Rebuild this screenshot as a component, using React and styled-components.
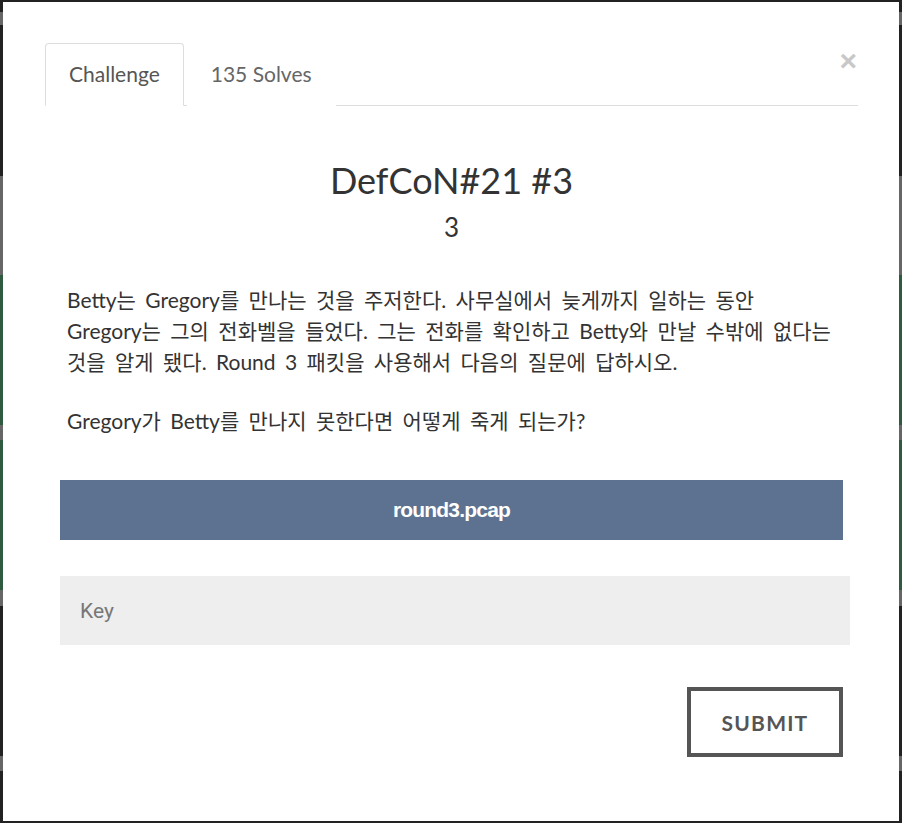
import styled, { createGlobalStyle } from "styled-components";

/* Global ---------------------------*/
const GlobalStyle = createGlobalStyle`
    html, body {
        margin: 0;
        padding: 0;
        background: #222;
    }
    body {
        font-family: Lato, "Noto Sans CJK KR", sans-serif;
    }
    * {
        box-sizing: border-box;
    }
`;

const App = () => {
    return (
        <Backdrop>
            <GlobalStyle />
            <Modal>
                <CloseButton aria-label="Close">×</CloseButton>
                <TabNav>
                    <Tab active>Challenge</Tab>
                    <Tab>135 Solves</Tab>
                </TabNav>

                <Body>
                    <Title>DefCoN#21 #3</Title>
                    <Points>3</Points>

                    <Description>
                        <p>
                            Betty는 Gregory를 만나는 것을 주저한다. 사무실에서 늦게까지 일하는 동안
                            <br />
                            Gregory는 그의 전화벨을 들었다. 그는 전화를 확인하고 Betty와 만날 수밖에 없다는
                            <br />
                            것을 알게 됐다. Round 3 패킷을 사용해서 다음의 질문에 답하시오.
                        </p>
                        <p>Gregory가 Betty를 만나지 못한다면 어떻게 죽게 되는가?</p>
                    </Description>

                    <FileButton href="#">round3.pcap</FileButton>

                    <KeyInput type="text" placeholder="Key" />

                    <Actions>
                        <SubmitButton type="button">Submit</SubmitButton>
                    </Actions>
                </Body>
            </Modal>
        </Backdrop>
    );
};

export default App;

/* Styles ---------------------------*/
const Backdrop = styled.div`
    height: 823px;
    padding: 2px 3px 2px 3px;
    display: flex;
    background: linear-gradient(
        to bottom,
        #222 0px,
        #222 12px,
        #666 12px,
        #666 25px,
        #222 25px,
        #222 176px,
        #666 176px,
        #666 275px,
        #2f5a3f 275px,
        #2f5a3f 425px,
        #666 425px,
        #666 440px,
        #2f5a3f 440px,
        #2f5a3f 590px,
        #666 590px,
        #666 606px,
        #222 606px,
        #222 756px,
        #666 756px,
        #666 771px,
        #222 771px
    );
`;

const Modal = styled.div`
    position: relative;
    width: 896px;
    height: 819px;
    background: #fff;
    padding: 41px 0 0 42px;
`;

const CloseButton = styled.button`
    position: absolute;
    top: 44px;
    right: 42px;
    border: none;
    background: none;
    padding: 0;
    font-family: "Liberation Sans", Arial, sans-serif;
    font-size: 30px;
    font-weight: bold;
    line-height: 30px;
    color: #c8c8c8;
    cursor: pointer;
`;

const TabNav = styled.ul`
    display: flex;
    width: 813px;
    list-style: none;
    margin: 0;
    padding: 0;
    border-bottom: 1px solid #ddd;
`;

const Tab = styled.li`
    margin: 0 3px -1px 0;
    padding: 17px 23px 19px 23px;
    font-size: 21px;
    line-height: 25px;
    color: ${(props) => (props.active ? "#555" : "#666")};
    background: #fff;
    border: 1px solid ${(props) => (props.active ? "#ddd" : "transparent")};
    border-bottom-color: ${(props) => (props.active ? "#fff" : "transparent")};
    border-radius: 4px 4px 0 0;
    cursor: pointer;
`;

const Body = styled.div`
    width: 798px;
    padding: 50px 0 0 15px;
    display: flex;
    flex-direction: column;
`;

const Title = styled.h3`
    margin: 0;
    text-align: center;
    font-size: 36px;
    font-weight: 400;
    line-height: 48px;
    color: #333;
`;

const Points = styled.h4`
    margin: 7px 0 0 0;
    text-align: center;
    font-size: 26px;
    font-weight: 400;
    line-height: 32px;
    color: #333;
`;

const Description = styled.div`
    margin-top: 41px;
    padding: 0 0 0 7px;
    font-size: 21px;
    word-spacing: 4px;
    line-height: 31px;
    color: #333;
    white-space: nowrap;

    p {
        margin: 0 0 28px 0;
    }
`;

const FileButton = styled.a`
    display: block;
    width: 783px;
    height: 60px;
    margin-top: 16px;
    background: #5c7290;
    color: #fff;
    text-align: center;
    text-decoration: none;
    font-family: "Liberation Sans", Arial, sans-serif;
    font-weight: bold;
    font-size: 21px;
    letter-spacing: -0.8px;
    line-height: 60px;
`;

const KeyInput = styled.input`
    width: 790px;
    height: 69px;
    margin-top: 36px;
    padding: 0 20px;
    border: none;
    outline: none;
    background: #eee;
    font-family: Roboto, "Liberation Sans", sans-serif;
    font-size: 21px;
    color: #555;

    &::placeholder {
        color: #777;
    }
`;

const Actions = styled.div`
    display: flex;
    justify-content: flex-end;
    width: 783px;
    margin-top: 42px;
`;

const SubmitButton = styled.button`
    width: 156px;
    height: 70px;
    border: 4px solid #555;
    background: #fff;
    color: #555;
    font-family: Lato, sans-serif;
    font-size: 21px;
    font-weight: bold;
    letter-spacing: 1.2px;
    text-transform: uppercase;
    cursor: pointer;
`;
